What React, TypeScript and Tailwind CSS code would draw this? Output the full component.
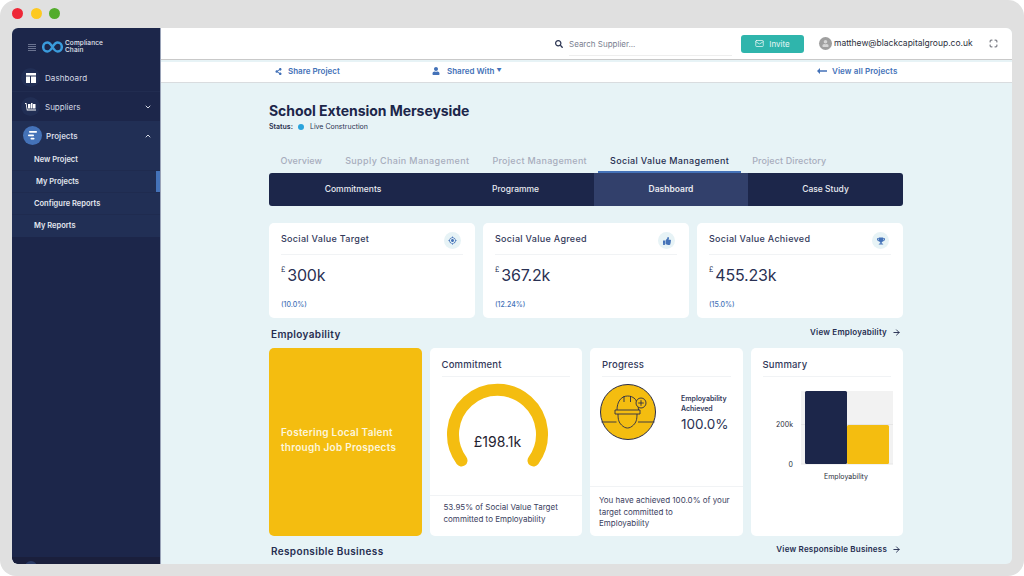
import { ArrowRight, ChevronDown, ChevronUp, Mail, Maximize } from 'lucide-react'
import { FaSearch, FaShareAlt, FaThumbsUp, FaTrophy, FaUser } from 'react-icons/fa'
import { MdMyLocation } from 'react-icons/md'

const font = { fontFamily: 'Inter, "Liberation Sans", sans-serif' }

function SideIcon({ children, active }: { children: React.ReactNode; active?: boolean }) {
  return (
    <span className={active ? 'w-[19px] h-[19px] rounded-full bg-[#4472b8] flex items-center justify-center ml-[2px] mr-[4px]' : 'w-[19px] h-[19px] rounded-full bg-[#212e54] flex items-center justify-center mr-[5px]'}>
      {children}
    </span>
  )
}

function Sidebar() {
  return (
    <aside className="w-[149px] shrink-0 bg-[#1c264a] border-r border-[#9aa3b8] flex flex-col text-[#d5d9e4] rounded-bl-[6px] overflow-hidden">
      <div className="h-[36px] flex items-center pl-[16px] pt-[2px] shrink-0">
        <span className="w-[8px] flex flex-col gap-[1px] mr-[6px]">
          <span className="h-px bg-[#6a7390]" />
          <span className="h-px bg-[#6a7390]" />
          <span className="h-px bg-[#6a7390]" />
          <span className="h-px bg-[#6a7390]" />
        </span>
        <svg width="21" height="12" viewBox="0 0 21 12" fill="none">
          <path d="M10.500 6C8.800 3 7.300 1.500 5.300 1.500 2.900 1.500 1.200 3.500 1.200 6s1.700 4.500 4.100 4.500c2 0 3.500-1.500 5.200-4.500s3.200-4.500 5.200-4.500c2.400 0 4.100 2 4.100 4.500s-1.700 4.500-4.100 4.500c-2 0-3.500-1.500-5.200-4.500Z" stroke="#3a9bdc" strokeWidth="2.500" />
        </svg>
        <span className="ml-[2px] text-[6.500px] leading-[7.500px] font-medium text-[#e4e8f0] tracking-[0.1px]">Compliance<br />Chain</span>
      </div>
      <div className="h-[28px] flex items-center pl-[9px] border-b border-[#212c50] text-[8px] tracking-[0.1px] shrink-0">
        <SideIcon>
          <svg width="10" height="10" viewBox="0 0 10 10" fill="white"><rect x="0" y="0" width="10" height="2.500" /><rect x="0" y="3.500" width="4" height="6.500" /><rect x="5" y="3.500" width="5" height="6.500" /></svg>
        </SideIcon>
        Dashboard
      </div>
      <div className="h-[29px] flex items-center pl-[9px] pr-[8px] text-[8px] shrink-0">
        <SideIcon>
          <svg width="11" height="10" viewBox="0 0 11 10" fill="white"><path d="M0 1h1.500l1 6.500H11V8.500H1.800L.8 2H0Z" /><rect x="3" y="2" width="2.500" height="4.500" /><rect x="6" y="1" width="1.500" height="5.500" /><rect x="8" y="2" width="2.500" height="4.500" /></svg>
        </SideIcon>
        <span className="flex-1">Suppliers</span>
        <ChevronDown size={8} strokeWidth={3} />
      </div>
      <div className="bg-[#212f55] shrink-0">
        <div className="h-[29px] flex items-center pl-[9px] pr-[8px] text-[8px] font-semibold">
          <SideIcon active>
            <svg width="10" height="9" viewBox="0 0 10 9" fill="white"><rect x="1" y="0" width="8" height="1.800" rx="0.800" /><rect x="0" y="3.400" width="6" height="1.800" rx="0.800" /><rect x="2.500" y="6.800" width="4" height="1.800" rx="0.800" /></svg>
          </SideIcon>
          <span className="flex-1">Projects</span>
          <ChevronUp size={8} strokeWidth={3} />
        </div>
        <div className="text-[7.500px] font-semibold text-[#e4e8f0] mt-[-1px]">
          <div className="h-[22px] flex items-center pl-[22px] border-b border-[#1f2b4f]">New Project</div>
          <div className="h-[22px] flex items-center pl-[24px] border-b border-[#1f2b4f] relative">
            My Projects
            <span className="absolute right-0 top-0 w-[4px] h-[21px] bg-[#4472b8]" />
          </div>
          <div className="h-[22px] flex items-center pl-[22px] border-b border-[#1f2b4f]">Configure Reports</div>
          <div className="h-[22px] flex items-center pl-[22px]">My Reports</div>
        </div>
      </div>
      <div className="flex-1" />
      <div className="h-[7px] bg-[#1a1f3c] shrink-0 relative overflow-hidden">
        <span className="absolute left-[13px] top-[4px] w-[12px] h-[12px] rounded-full bg-[#2a3a66]" />
      </div>
    </aside>
  )
}

function Topbar() {
  return (
    <header className="h-[32px] bg-white border-b border-[#c9c9c9] flex items-center shrink-0 text-[8px]">
      <FaSearch size={8} className="ml-[394px] text-[#2c3552]" />
      <div className="ml-[6px] w-[163px] h-[24px] flex items-center border-b border-[#eeeeee] text-[#7a8090] mt-[1px]">Search Supplier...</div>
      <div className="ml-[9px] w-[63px] h-[18px] rounded-[3px] bg-[#2fb5ac] text-[#e9f7f6] flex items-center justify-center gap-[5px]">
        <Mail size={9} />
        Invite
      </div>
      <span className="ml-[15px] w-[13px] h-[13px] rounded-full bg-[#9f9f9f] flex items-center justify-center">
        <FaUser size={7} className="text-[#d5d5d5]" />
      </span>
      <span className="ml-[2px] text-[#2b2f3c] text-[8.500px] w-[149px] whitespace-nowrap">matthew@blackcapitalgroup.co.uk</span>
      <Maximize size={9} className="ml-[6px] text-[#2b2f3c]" />
    </header>
  )
}

function Subbar() {
  return (
    <div className="h-[21px] mt-[2px] pb-[2px] bg-white border-b border-[#d9dcdf] flex items-center shrink-0 text-[8px] font-semibold text-[#4472b8]">
      <FaShareAlt size={7} className="ml-[114px]" />
      <span className="ml-[6px] w-[144px]">Share Project</span>
      <FaUser size={8} />
      <span className="ml-[7px] w-[60px] flex items-center gap-[2px]">Shared With <span className="text-[5px]">▼</span></span>
      <span className="w-[310px]" />
      <svg width="10" height="6" viewBox="0 0 10 6" fill="#4472b8"><path d="M3 0v2.300h7v1.400H3V6L0 3Z" /></svg>
      <span className="ml-[5px] whitespace-nowrap tracking-[0.1px]">View all Projects</span>
    </div>
  )
}

function StatCard({ title, amount, pct, icon }: { title: string; amount: string; pct: string; icon: React.ReactNode }) {
  return (
    <div className="bg-white rounded-[5px] h-[95px] px-[12px] flex flex-col">
      <div className="h-[32px] flex items-start justify-between border-b border-[#f1f3f5] shrink-0">
        <span className="mt-[10px] text-[9px] leading-[12px] font-medium text-[#33395a] tracking-[0.3px]">{title}</span>
        <span className="w-[17px] h-[17px] mt-[9px] mr-[2px] rounded-full bg-[#e7f3f6] flex items-center justify-center text-[#4472b8]">{icon}</span>
      </div>
      <div className="flex items-start mt-[10px] text-[#2a3153]">
        <span className="text-[7px] leading-[8px] mt-[1px] mr-[2px]">£</span>
        <span className="text-[16px] leading-[20px] tracking-[-0.2px]">{amount}</span>
      </div>
      <div className="mt-[15px] text-[7px] leading-[10px] font-medium text-[#4472b8]">{pct}</div>
    </div>
  )
}

function SectionHead({ title, link }: { title: string; link?: string }) {
  return (
    <div className="flex items-center justify-between px-[2px]">
      <span className="text-[10px] font-semibold text-[#252d50] tracking-[0.35px]">{title}</span>
      {link && (
        <span className="flex items-center gap-[5px] text-[8px] font-semibold text-[#252d50] mb-[4px] tracking-[0.2px]">
          {link}
          <ArrowRight size={9} strokeWidth={2.500} />
        </span>
      )}
    </div>
  )
}

function CardTitle({ children }: { children: React.ReactNode }) {
  return (
    <div className="mx-[12px] h-[29px] pt-[11px] border-b border-[#f1f3f5] text-[9.500px] leading-[12px] font-medium text-[#33395a] tracking-[0.2px] shrink-0">{children}</div>
  )
}

function Gauge() {
  return (
    <div className="relative h-[118px] shrink-0">
      <svg width="152" height="118" viewBox="0 0 152 118" fill="none">
        <path d="M31.500 83.500A44.500 44.500 0 1 1 103.500 83.500" stroke="#f4bd10" strokeWidth="12" strokeLinecap="round" />
      </svg>
      <span className="absolute left-0 w-[136px] top-[54px] text-center text-[14px] leading-[22px] text-[#1f2230]">£198.1k</span>
    </div>
  )
}

function HardHat() {
  return (
    <svg width="58" height="58" viewBox="0 0 58 58" fill="none" stroke="#2a2d4a">
      <circle cx="29" cy="29" r="27.500" fill="#f4bd10" strokeWidth="1" />
      <g strokeWidth="0.900">
        <path d="M2.500 39h15M39 39h16.500" />
        <path d="M18 27c0-8 4-14 10.500-14 3 0 5 .8 7 2.500" />
        <path d="M35 15c2.500 2 4 6 4.500 12" />
        <path d="M16 27h25v4H16Z" />
        <path d="M19 31c0 6 1 8.500 3.500 11 2 2 4 3 6 3s4-1 6-3c2.500-2.500 3.500-5 3.500-11" />
        <path d="M25 13v6M31.500 13v6" />
        <circle cx="42" cy="20" r="5" fill="#f4bd10" />
        <path d="M42 17.200v5.600M39.200 20h5.600" />
      </g>
    </svg>
  )
}

function SummaryChart() {
  return (
    <svg width="152" height="110" viewBox="0 0 152 110" fill="none" className="shrink-0">
      <rect x="50" y="14" width="92" height="73" fill="#f2f2f2" />
      <path d="M50 47.500h92" stroke="#e6e6e6" />
      <path d="M50 87h92" stroke="#e6e6e6" />
      <rect x="54" y="14" width="42" height="73" rx="1.500" fill="#1c264a" />
      <rect x="96" y="48" width="42" height="39" rx="1.500" fill="#f4bd10" />
      <text x="42" y="50" textAnchor="end" fontSize="7" fill="#2b2f3c">200k</text>
      <text x="42" y="90" textAnchor="end" fontSize="7" fill="#2b2f3c">0</text>
      <text x="95" y="102" textAnchor="middle" fontSize="7" fill="#2b2f3c">Employability</text>
    </svg>
  )
}

export default function App() {
  return (
    <div style={font} className="w-[1024px] h-[576px] bg-white overflow-hidden">
      <div className="w-full h-full bg-[#e0e0e0] rounded-[16px] flex flex-col px-[12px] pb-[12px]">
        <div className="h-[28px] flex items-center gap-[7.500px] pb-[1px] shrink-0">
          <span className="w-[11px] h-[11px] rounded-full bg-[#ee2737]" />
          <span className="w-[11px] h-[11px] rounded-full bg-[#fdc921]" />
          <span className="w-[11px] h-[11px] rounded-full bg-[#53ac2c]" />
        </div>
        <div className="flex-1 flex min-h-0 rounded-[6px] overflow-hidden bg-[#e7f3f6]">
          <Sidebar />
          <main className="flex-1 min-w-0 flex flex-col">
            <Topbar />
            <Subbar />
            <div className="flex-1 min-h-0 overflow-hidden pl-[108px] w-[742px]">
              <h1 className="mt-[19px] text-[14px] leading-[18px] font-bold text-[#1c264a] tracking-[-0.05px]">School Extension Merseyside</h1>
              <div className="flex items-center text-[7px] mt-[2px] leading-[10px] text-[#2b3250]">
                <span className="font-semibold">Status:</span>
                <span className="w-[6px] h-[6px] rounded-full bg-[#29a3dc] ml-[5px] mr-[6px]" />
                Live Construction
              </div>
              <div className="flex mt-[19px] h-[22px] text-[9px] font-medium text-[#a7adbd]">
                <span className="px-[11.500px] pb-[2px] flex items-center tracking-[0.1px]">Overview</span>
                <span className="px-[11.500px] pb-[2px] flex items-center tracking-[0.36px]">Supply Chain Management</span>
                <span className="px-[11.500px] pb-[2px] flex items-center tracking-[0.3px]">Project Management</span>
                <span className="px-[11.500px] flex items-center tracking-[0.34px] text-[#262e50] border-b-2 border-[#4472b8]">Social Value Management</span>
                <span className="px-[11.500px] pb-[2px] flex items-center tracking-[0.1px]">Project Directory</span>
              </div>
              <div className="flex h-[33px] bg-[#1c264a] rounded-[3px] overflow-hidden text-[8.500px] font-medium text-[#e9ebf1]">
                <span className="w-[168px] flex items-center justify-center">Commitments</span>
                <span className="w-[157px] flex items-center justify-center">Programme</span>
                <span className="w-[154px] flex items-center justify-center bg-[#32406b] font-semibold">Dashboard</span>
                <span className="w-[155px] flex items-center justify-center">Case Study</span>
              </div>
              <div className="grid grid-cols-3 gap-[8px] mt-[17px]">
                <StatCard title="Social Value Target" amount="300k" pct="(10.0%)" icon={<MdMyLocation size={9} />} />
                <StatCard title="Social Value Agreed" amount="367.2k" pct="(12.24%)" icon={<FaThumbsUp size={8} />} />
                <StatCard title="Social Value Achieved" amount="455.23k" pct="(15.0%)" icon={<FaTrophy size={8} />} />
              </div>
              <div className="mt-[8px] h-[22px]">
                <SectionHead title="Employability" link="View Employability" />
              </div>
              <div className="grid grid-cols-4 gap-[8px] h-[188px]">
                <div className="bg-[#f4bd10] rounded-[5px] flex items-center px-[12px] text-[10px] leading-[14.500px] font-semibold text-[#fdf6dc] tracking-[0.25px]">
                  <span className="mb-[5px]">Fostering Local Talent<br />through Job Prospects</span>
                </div>
                <div className="bg-white rounded-[5px] flex flex-col">
                  <CardTitle>Commitment</CardTitle>
                  <Gauge />
                  <div className="border-t border-[#f1f3f5] px-[14px] pt-[6px] text-[8px] leading-[11.500px] text-[#3b4160]">
                    53.95% of Social Value Target committed to Employability
                  </div>
                </div>
                <div className="bg-white rounded-[5px] flex flex-col">
                  <CardTitle>Progress</CardTitle>
                  <div className="h-[109px] flex items-start pl-[9px] pt-[6px] shrink-0">
                    <HardHat />
                    <div className="ml-[24px] mt-[11px]">
                      <div className="text-[7px] leading-[10px] font-semibold text-[#33395a]">Employability<br />Achieved</div>
                      <div className="text-[13.500px] leading-[20px] text-[#2a3153]">100.0%</div>
                    </div>
                  </div>
                  <div className="border-t border-[#f1f3f5] px-[9px] pt-[8px] text-[8px] leading-[11.500px] text-[#3b4160]">
                    You have achieved 100.0% of your<br />target committed to<br />Employability
                  </div>
                </div>
                <div className="bg-white rounded-[5px] flex flex-col">
                  <CardTitle>Summary</CardTitle>
                  <SummaryChart />
                </div>
              </div>
              <div className="mt-[7px]">
                <SectionHead title="Responsible Business" link="View Responsible Business" />
              </div>
            </div>
          </main>
        </div>
      </div>
    </div>
  )
}
